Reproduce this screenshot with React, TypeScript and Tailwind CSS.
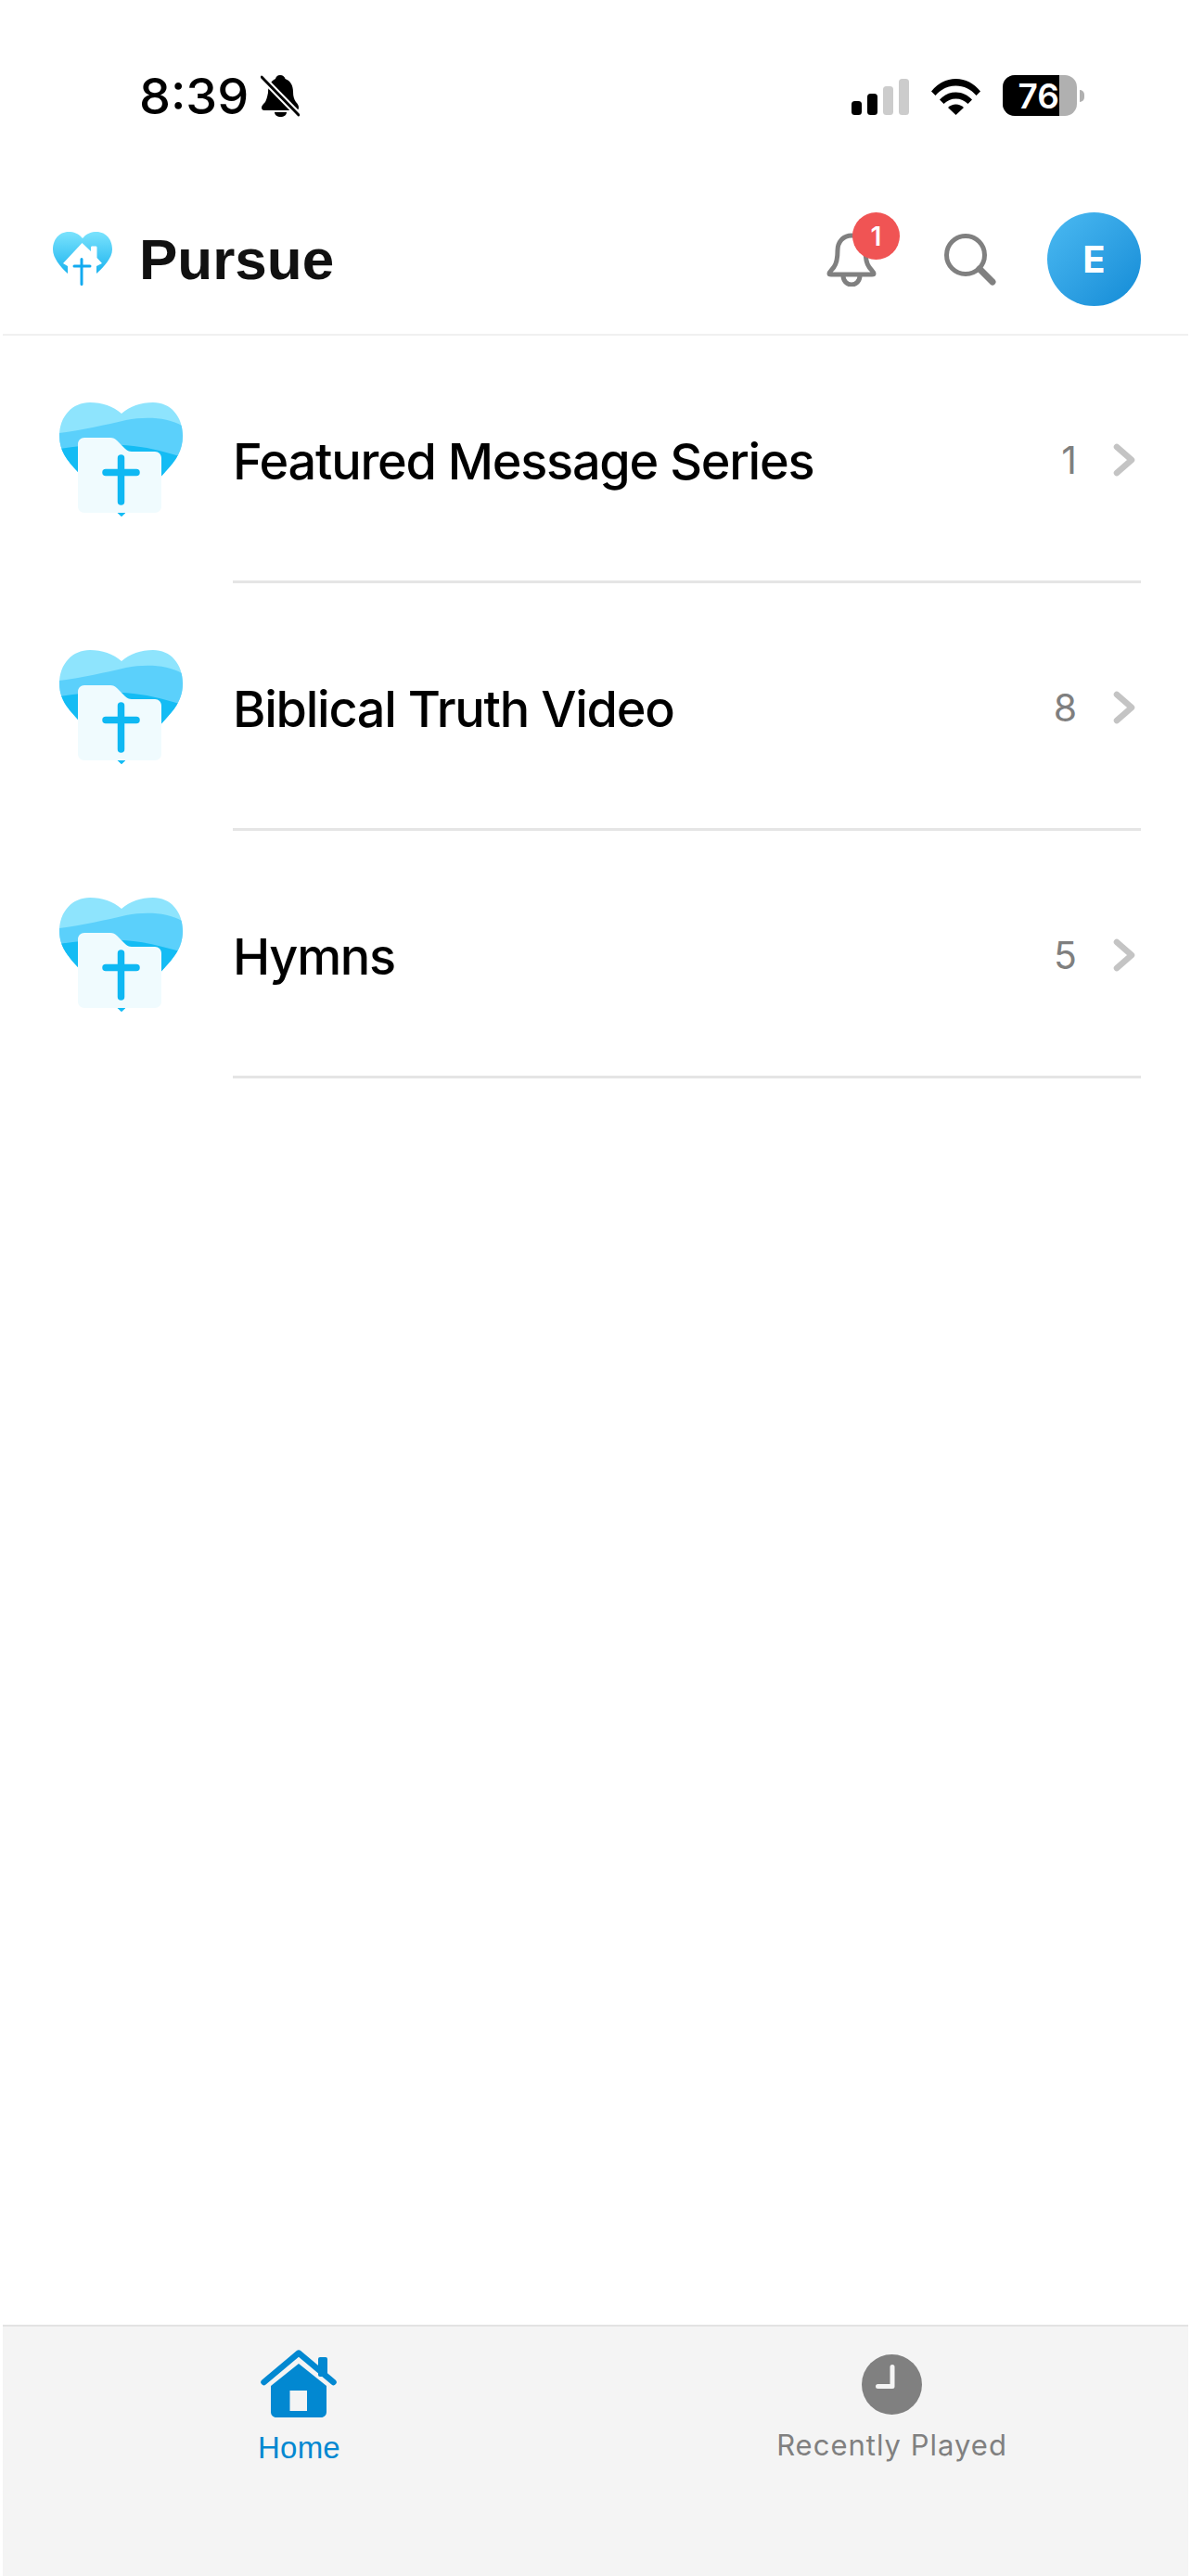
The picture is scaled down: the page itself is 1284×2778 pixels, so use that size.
const rows = [
  { title: "Featured Message Series", count: 1 },
  { title: "Biblical Truth Video", count: 8 },
  { title: "Hymns", count: 5 },
];

function LogoHeart() {
  return (
    <svg width="65" height="60" viewBox="0 0 65 60" className="shrink-0">
      <defs>
        <linearGradient id="logoFill" x1="0" y1="0" x2="0" y2="1">
          <stop offset="0" stopColor="#7be3fd" />
          <stop offset="1" stopColor="#1cb4ef" />
        </linearGradient>
      </defs>
      <path
        d="M32 7C28 2 23 0 17 0 7 0 0 8 0 19c0 9 8 19 16 26h31c8-7 17-17 17-26C64 8 57 0 47 0c-6 0-11 2-15 7Z"
        fill="url(#logoFill)"
      />
      <path d="M31.500 12 41 21V17c0-1 .5-1.500 1.500-1.500H46c1 0 1.500.5 1.500 1.500V28L53 34 47 37V50H16V37L11 34Z" fill="#fff" />
      <path d="M31 29.500v27M23 37h17" stroke="#12aaf0" strokeWidth="3" strokeLinecap="round" fill="none" />
    </svg>
  );
}

function FolderHeart({ id }: { id: string }) {
  return (
    <svg width="134" height="126" viewBox="0 0 134 126" className="shrink-0">
      <defs>
        <clipPath id={id}>
          <path d="M67 12C58 4 46 0 33 0 14 0 0 15 0 36c0 16 8 26 20 39 15 17 35 37 47 48 12-11 32-31 47-48 12-13 19-23 19-39C133 15 120 0 101 0 88 0 76 4 67 12Z" />
        </clipPath>
      </defs>
      <g clipPath={`url(#${id})`}>
        <rect width="134" height="126" fill="#8ee4fd" />
        <path d="M0 33C25 30 50 24 72 19c22-4 45-3 62 7v100H0Z" fill="#5bd0fb" />
        <path d="M0 50C25 46 50 44 80 47c20 2 38 8 54 12v67H0Z" fill="#14bcf4" />
      </g>
      <path
        d="M20 45c0-4 3-7 7-7h28c3 0 5 1 7 3l9 9c2 2 4 3 7 3h25c4 0 7 3 7 7v52c0 4-3 7-7 7H27c-4 0-7-3-7-7Z"
        fill="#f0fbfe"
      />
      <path d="M66.500 60v47M50 75.500h33" stroke="#0fb8f3" strokeWidth="7.500" strokeLinecap="round" fill="none" />
    </svg>
  );
}

export default function App() {
  return (
    <div className="flex h-[2778px] w-[1284px] flex-col overflow-hidden bg-white font-['Inter',sans-serif]">
      {/* status bar */}
      <div className="flex h-[229px] shrink-0 items-start justify-between pl-[150px] pr-[115px] pt-[81px]">
        <div className="flex items-center gap-[13px] text-black">
          <span className="text-[54px] leading-[45px] font-medium">8:39</span>
          <svg width="42" height="45" viewBox="0 0 42 45">
            <path
              d="M21 0c3 0 5 2 5.500 4C32 6 35 11 35 18c0 5 1 8 3 11 2 2 3 4 3 6 0 2-1 3-3 3H4c-2 0-3-1-3-3s2-4 4-6c1-2 2-5 3-10 0-7 3-13 8-15 .5-2 2-4 5-4Z"
              fill="#000"
            />
            <path d="M15 40h13c0 3-3 5-6.500 5S15 43 15 40Z" fill="#000" />
            <path d="M1 2 41 43" stroke="#fff" strokeWidth="7" />
            <path d="M1 2 41 43" stroke="#000" strokeWidth="3" strokeLinecap="round" />
          </svg>
        </div>
        <div className="flex items-center gap-[24px]">
          <svg width="62" height="39" viewBox="0 0 62 39" className="mt-[3px]">
            <rect x="0" y="24" width="11" height="15" rx="3.500" fill="#000" />
            <rect x="17" y="16" width="11" height="23" rx="3.500" fill="#000" />
            <rect x="34" y="8" width="11" height="31" rx="3.500" fill="#ccc" />
            <rect x="51" y="0" width="11" height="39" rx="3.500" fill="#ccc" />
          </svg>
          <svg width="53" height="39" viewBox="0 0 53 39" className="mt-[3px]">
            <path d="M0 13.500C7 5 16 0 26.500 0S46 5 53 13.500L48.500 18C43 11.500 35 7.500 26.500 7.500S10 11.500 4.500 18Z" fill="#000" />
            <path d="M9 22.500c4.500-5 10.500-8 17.500-8s13 3 17.500 8L39.500 27c-3.500-3.500-8-5.500-13-5.500s-9.500 2-13 5.500Z" fill="#000" />
            <path d="M18 31c2.300-2.300 5.300-3.500 8.500-3.500S32.700 28.700 35 31l-8.500 8Z" fill="#000" />
          </svg>
          <div className="flex items-center">
            <div className="flex h-[44px] w-[80px] overflow-hidden rounded-[13px] bg-[#b0b0b0]">
              <div className="flex h-full w-[61px] items-center justify-end bg-black">
                <span className="text-[37px] leading-none font-semibold text-white">76</span>
              </div>
            </div>
            <div className="ml-[3px] h-[13px] w-[5px] rounded-r-full bg-[#b0b0b0]" />
          </div>
        </div>
      </div>

      {/* header */}
      <div className="ml-[3px] mr-[3px] flex h-[133px] shrink-0 items-start border-b-2 border-[#f0f0f0] pl-[54px] pr-[51px]">
        <div className="mt-[21px]">
          <LogoHeart />
        </div>
        <span className="ml-[28px] mt-[15px] font-['Liberation_Sans',sans-serif] text-[62px] leading-[72px] font-bold text-[#111]">
          Pursue
        </span>
        <div className="ml-auto flex items-start">
          <div className="relative mt-[22px] h-[58px] w-[54px]">
            <svg width="54" height="58" viewBox="0 0 54 58" fill="none" stroke="#808080" strokeWidth="5" strokeLinejoin="round">
              <path d="M27 3c-9 0-15 7-15 16 0 9-1 14-4 18-2 3-5 5-5 7 0 1 1 1 2 1h44c1 0 2 0 2-1 0-2-3-4-5-7-3-4-4-9-4-18 0-9-6-16-15-16Z" />
              <path d="M18 46c0 6 4 10 9 10s9-4 9-10" />
            </svg>
            <span className="absolute left-[28px] top-[-22px] flex h-[51px] w-[51px] items-center justify-center rounded-full bg-[#f05454] text-[28px] font-semibold text-white">
              1
            </span>
          </div>
          <svg width="56" height="56" viewBox="0 0 56 56" fill="none" stroke="#808080" className="ml-[73px] mt-[23px]">
            <circle cx="23" cy="23" r="20.500" strokeWidth="5" />
            <path d="M38 38 52 52" strokeWidth="7" strokeLinecap="round" />
          </svg>
          <div className="ml-[55px] flex h-[101px] w-[101px] items-center justify-center rounded-full bg-gradient-to-br from-[#4abaf2] to-[#0f8bd6] text-[40px] font-bold text-white">
            E
          </div>
        </div>
      </div>

      {/* list */}
      <div className="flex flex-1 flex-col">
        {rows.map((row, i) => (
          <div key={row.title} className="flex h-[267px] items-start pl-[64px]">
            <div className="mt-[72px]">
              <FolderHeart id={`folderClip${i}`} />
            </div>
            <div className="ml-[53px] mr-[54px] flex h-full flex-1 items-start border-b-[3px] border-[#e5e5e5]">
              <span className="mt-[103px] text-[54px] leading-[66px] font-[450] tracking-[-1.25px] text-black">{row.title}</span>
              <span className="ml-auto mt-[109px] text-[41px] leading-[50px] text-[#7f7f7f]">{row.count}</span>
              <svg width="26" height="36" viewBox="0 0 26 36" fill="none" stroke="#c4c4c4" strokeWidth="6.500" strokeLinecap="round" strokeLinejoin="round" className="ml-[38px] mr-[5px] mt-[116px]">
                <path d="M5 4 21 18 5 32" />
              </svg>
            </div>
          </div>
        ))}
      </div>

      {/* tab bar */}
      <div className="ml-[3px] mr-[3px] flex h-[271px] shrink-0 border-t-2 border-[#e3e3e3] bg-[#f4f4f4]">
        <div className="flex flex-1 flex-col items-center pt-[25px]">
          <svg width="83" height="74" viewBox="0 0 83 74">
            <path d="M41 15 11 39V67c0 3.500 2.500 6 6 6H65c3.500 0 6-2.500 6-6V39ZM31.500 44H50V66H31.500Z" fill="#0288d1" fillRule="evenodd" />
            <rect x="62" y="8" width="10" height="21" rx="2" fill="#0288d1" />
            <path d="M3.500 35 41 3.500 78.500 35" stroke="#0288d1" strokeWidth="6.500" strokeLinecap="round" strokeLinejoin="round" fill="none" />
          </svg>
          <span className="mt-[12px] font-['Liberation_Sans',sans-serif] text-[33px] leading-[40px] tracking-[0.2px] text-[#0288d1]">Home</span>
        </div>
        <div className="flex flex-1 flex-col items-center pt-[30px]">
          <svg width="65" height="65" viewBox="0 0 65 65">
            <circle cx="32.500" cy="32.500" r="32.500" fill="#808080" />
            <path d="M33 13.500v21H17.500" stroke="#f4f4f4" strokeWidth="5" strokeLinecap="round" strokeLinejoin="round" fill="none" />
          </svg>
          <span className="mt-[13px] text-[31px] leading-[40px] tracking-[1px] text-[#808080]">Recently Played</span>
        </div>
      </div>
    </div>
  );
}
